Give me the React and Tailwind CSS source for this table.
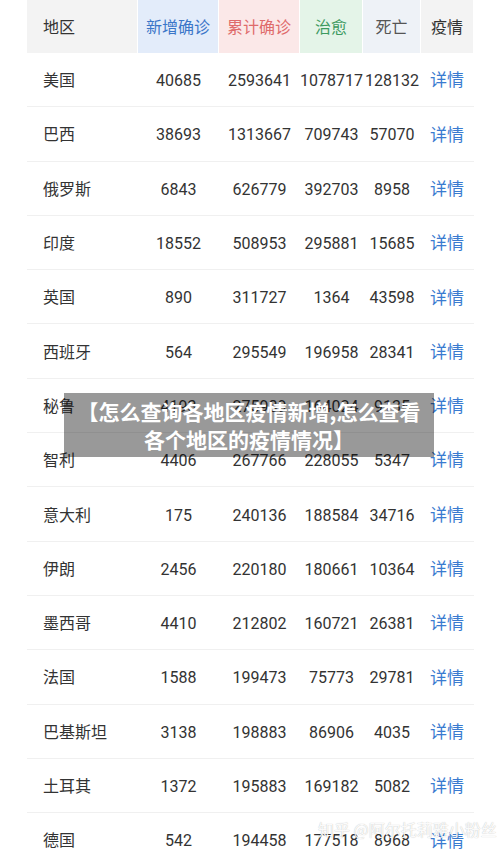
const rows = [
  ['美国', '40685', '2593641', '1078717', '128132'],
  ['巴西', '38693', '1313667', '709743', '57070'],
  ['俄罗斯', '6843', '626779', '392703', '8958'],
  ['印度', '18552', '508953', '295881', '15685'],
  ['英国', '890', '311727', '1364', '43598'],
  ['西班牙', '564', '295549', '196958', '28341'],
  ['秘鲁', '4193', '275989', '164024', '9135'],
  ['智利', '4406', '267766', '228055', '5347'],
  ['意大利', '175', '240136', '188584', '34716'],
  ['伊朗', '2456', '220180', '180661', '10364'],
  ['墨西哥', '4410', '212802', '160721', '26381'],
  ['法国', '1588', '199473', '75773', '29781'],
  ['巴基斯坦', '3138', '198883', '86906', '4035'],
  ['土耳其', '1372', '195883', '169182', '5082'],
  ['德国', '542', '194458', '177518', '8968'],
];

const cols = 'grid grid-cols-[111px_81px_81px_63px_58px_52px]';

export default function App() {
  return (
    <div className="relative h-[851px] overflow-hidden bg-white font-['Roboto','Noto_Sans_CJK_SC',sans-serif] text-[16px] text-[#333]">
      <div className="ml-[27px] w-[447px]">
        <div className={`${cols} h-[53px] items-stretch`}>
          <div className="flex items-center bg-[#f3f3f3] pl-4 pt-[3px] border-r border-white">地区</div>
          <div className="flex items-center justify-center bg-[#e3ecfa] pt-[3px] text-[#3b76c8] border-r border-white">新增确诊</div>
          <div className="flex items-center justify-center bg-[#fbe8e8] pt-[3px] text-[#df6b6b] border-r border-white">累计确诊</div>
          <div className="flex items-center justify-center bg-[#e4f4e8] pt-[3px] text-[#3d9a5f] border-r border-white">治愈</div>
          <div className="flex items-center justify-center bg-[#eef2f7] pt-[3px] text-[#555] border-r border-white">死亡</div>
          <div className="flex items-center justify-center bg-[#f3f3f3] pt-[3px] text-[#333]">疫情</div>
        </div>
        {rows.map((r) => (
          <div key={r[0]} className={`${cols} h-[54.3px] items-center pt-[3px] border-b border-[#f0f0f0] whitespace-nowrap`}>
            <div className="pl-4">{r[0]}</div>
            <div className="text-center">{r[1]}</div>
            <div className="text-center">{r[2]}</div>
            <div className="flex justify-center">{r[3]}</div>
            <div className="flex justify-center">{r[4]}</div>
            <div className="text-center text-[#3a7bd0] text-[17px]">详情</div>
          </div>
        ))}
      </div>

      <div className="absolute left-[64px] top-[393px] w-[370px] h-[64px] bg-black/40 flex flex-col items-center justify-center text-white font-bold text-[21px] leading-[28px] font-['Noto_Sans_CJK_SC',sans-serif]">
        <div>【怎么查询各地区疫情新增,怎么查看</div>
        <div>各个地区的疫情情况】</div>
      </div>

      <div className="absolute left-[318px] top-[817px] text-[16px] text-white/95 font-['Noto_Sans_CJK_SC',sans-serif] [text-shadow:0_0_1px_rgba(0,0,0,0.3)]">
        知乎 @阿尔托莉雅小粉丝
      </div>
    </div>
  );
}
